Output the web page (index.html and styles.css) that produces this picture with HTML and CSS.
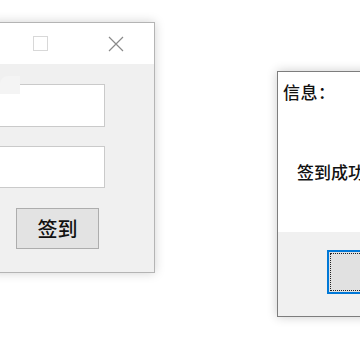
FILE: index.html
```html
<!DOCTYPE html>
<html>
<head>
<meta charset="utf-8">
<link rel="stylesheet" href="styles.css">
</head>
<body>
<div class="desk">
  <div class="win main">
    <div class="titlebar">
      <span class="max"></span>
      <svg class="close" width="16" height="16" viewBox="0 0 16 16"><path d="M1 1L15 15M15 1L1 15" stroke="#8a8a8a" stroke-width="1.2" fill="none"/></svg>
    </div>
    <div class="body">
      <div class="field f1"></div>
      <div class="field f2"></div>
      <div class="btn">签到</div>
      <div class="label"></div>
    </div>
  </div>
  <div class="win dlg">
    <div class="content">
      <div class="cap">信息：</div>
      <div class="msg">签到成功</div>
    </div>
    <div class="foot">
      <div class="okbtn"><div class="focus"></div></div>
    </div>
  </div>
</div>
</body>
</html>
```
FILE: styles.css
```css
html, body { margin: 0; padding: 0; background: #fff; }
body { width: 360px; height: 360px; overflow: hidden; font-family: "Noto Sans CJK SC", "Noto Sans", sans-serif; }
.desk { position: relative; width: 360px; height: 360px; }
.win { position: absolute; box-sizing: border-box; }
.main {
  left: -10px; top: 22px; width: 165px; height: 251px;
  border: 1px solid #b4b4b4;
  background: #f0f0f0;
  box-shadow: 0 0 10px rgba(0,0,0,0.18);
  display: flex; flex-direction: column;
}
.titlebar { height: 41px; background: #fff; position: relative; }
.max { position: absolute; left: 42px; top: 13px; width: 13px; height: 13px; border: 1px solid #d8d8d8; }
.close { position: absolute; left: 117px; top: 13px; }
.body { flex: 1; position: relative; padding: 20px 0 0 0; }
.field { margin-left: -1px; width: 115px; box-sizing: border-box; background: #fff; border: 1px solid #cacaca; }
.f1 { height: 43px; }
.f2 { height: 42px; margin-top: 19px; }
.btn {
  margin: 20px 0 0 25px; width: 83px; height: 41px; box-sizing: border-box;
  background: #e3e3e3; border: 1px solid #adadad;
  display: flex; align-items: center; justify-content: center;
  font-size: 20px; line-height: 1; color: #111; font-weight: 500;
}
.label { position: absolute; left: 9px; top: 12px; width: 20px; height: 18px; background: #f4f4f4; border-radius: 8px 0 0 0; }
.dlg {
  left: 277px; top: 71px; width: 100px; height: 246px;
  border: 1px solid #7d7d7d;
  box-shadow: 0 0 10px rgba(0,0,0,0.2);
  display: flex; flex-direction: column;
}
.content { height: 160px; background: #fff; padding: 11px 0 0 5px; box-sizing: border-box; font-size: 17px; line-height: 1; color: #111; font-weight: 500; }
.cap { white-space: nowrap; letter-spacing: 0.5px; }
.msg { margin: 63px 0 0 14px; white-space: nowrap; }
.foot { flex: 1; background: #f0f0f0; padding: 18px 0 0 49px; }
.okbtn {
  width: 80px; height: 44px; box-sizing: border-box;
  border: 2px solid #0078d7; background: #e1e1e1; padding: 1px;
}
.focus { width: 100%; height: 100%; box-sizing: border-box; border: 1px dotted #222; }
```
